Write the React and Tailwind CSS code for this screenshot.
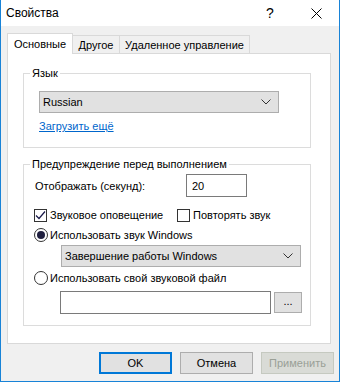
import React from 'react';

const font = { fontFamily: '"Liberation Sans", Arial, sans-serif' };

function Chevron() {
  return (
    <svg width="10" height="6" viewBox="0 0 10 6" className="text-[#333]">
      <path d="M0.5 0.5 L5 5 L9.5 0.5" fill="none" stroke="currentColor" strokeWidth="1" />
    </svg>
  );
}

function Select({ value, className }) {
  return (
    <div className={`flex h-[22px] w-[240px] items-center justify-between border border-[#adadad] bg-[#e1e1e1] pl-[3px] pr-[7px] ${className}`}>
      <span>{value}</span>
      <Chevron />
    </div>
  );
}

function Checkbox({ checked, label, className }) {
  return (
    <div className={`flex h-[16px] items-center gap-[3px] ${className}`}>
      <div className="grid h-[13px] w-[13px] shrink-0 place-items-center border border-[#333] bg-white">
        {checked && (
          <svg width="11" height="11" viewBox="0 0 11 11">
            <path d="M1 5.5 L4 8.5 L10 1.5" fill="none" stroke="#1a1a4a" strokeWidth="1.2" />
          </svg>
        )}
      </div>
      <span>{label}</span>
    </div>
  );
}

function Radio({ checked, label, className }) {
  return (
    <div className={`flex h-[16px] items-center gap-[2px] ${className}`}>
      <div className="grid h-[14px] w-[14px] shrink-0 place-items-center rounded-full border border-[#333] bg-white">
        {checked && <div className="h-[8px] w-[8px] rounded-full bg-[#1f1f3f]" />}
      </div>
      <span>{label}</span>
    </div>
  );
}

export default function App() {
  return (
    <div
      style={font}
      className="flex h-[382px] w-[340px] flex-col whitespace-nowrap border-x border-b border-[#1883d7] bg-[#f0f0f0] text-[11px] leading-[16px] text-black"
    >
      {/* title bar */}
      <div className="flex h-[26px] items-center bg-white">
        <span className="ml-[5px] flex-1 text-[12px]">Свойства</span>
        <div className="grid h-full w-[46px] place-items-center text-[14px]">?</div>
        <div className="grid h-full w-[46px] place-items-center">
          <svg width="11" height="11" viewBox="0 0 11 11">
            <path d="M0.5 0.5 L10.5 10.5 M10.5 0.5 L0.5 10.5" stroke="#000" strokeWidth="1" />
          </svg>
        </div>
      </div>

      {/* tabs */}
      <div className="relative z-10 flex h-[27px] items-end pl-[6px]">
        <div className="-mb-px flex h-[21px] w-[66px] items-start justify-center border-x border-t border-[#d9d9d9] bg-white pt-[2px]">
          Основные
        </div>
        <div className="flex h-[18px] w-[47px] items-start justify-center border-r border-t border-[#d9d9d9] pt-[1px]">
          Другое
        </div>
        <div className="flex h-[18px] w-[130px] items-start justify-center border-r border-t border-[#d9d9d9] pt-[1px]">
          Удаленное управление
        </div>
      </div>

      {/* panel */}
      <div className="ml-[6px] flex h-[291px] w-[324px] flex-col border border-[#d9d9d9] bg-white">
        <fieldset className="ml-[15px] mt-[11px] w-[288px] border border-[#dcdcdc] pb-[13px]">
          <legend className="ml-[6px] px-[2px]">Язык</legend>
          <Select value="Russian" className="ml-[15px] mt-[10px]" />
          <div className="ml-[15px] mt-[5px] w-fit text-[#0066cc] underline">Загрузить ещё</div>
        </fieldset>

        <fieldset className="ml-[15px] mt-[8px] w-[288px] border border-[#dcdcdc] pb-[11px]">
          <legend className="ml-[6px] px-[2px]">Предупреждение перед выполнением</legend>
          <div className="ml-[11px] mt-[2px] flex items-center">
            <span className="w-[151px]">Отображать (секунд):</span>
            <div className="flex h-[23px] w-[61px] items-center border border-[#7a7a7a] bg-white pl-[5px]">20</div>
          </div>
          <div className="mt-[10px] flex">
            <Checkbox checked label="Звуковое оповещение" className="ml-[10px] w-[143px]" />
            <Checkbox label="Повторять звук" />
          </div>
          <Radio checked label="Использовать звук Windows" className="ml-[10px] mt-[4px]" />
          <Select value="Завершение работы Windows" className="ml-[37px] mt-[2px]" />
          <Radio label="Использовать свой звуковой файл" className="ml-[10px] mt-[3px]" />
          <div className="ml-[36px] mt-[5px] flex items-center gap-[3px]">
            <div className="h-[23px] w-[211px] border border-[#7a7a7a] bg-white" />
            <div className="flex h-[21px] w-[28px] items-center justify-center border border-[#adadad] bg-[#e1e1e1] pb-[3px]">
              ...
            </div>
          </div>
        </fieldset>
      </div>

      {/* buttons */}
      <div className="mt-[8px] flex justify-end gap-[8px] pr-[5px]">
        <div className="grid h-[22px] w-[73px] place-items-center border-2 border-[#0078d7] bg-[#e1e1e1]">OK</div>
        <div className="grid h-[22px] w-[73px] place-items-center border border-[#adadad] bg-[#e1e1e1]">Отмена</div>
        <div className="grid h-[22px] w-[73px] place-items-center border border-[#c5c9c0] bg-[#d9dbd6] text-[#9aa096]">
          Применить
        </div>
      </div>
    </div>
  );
}
